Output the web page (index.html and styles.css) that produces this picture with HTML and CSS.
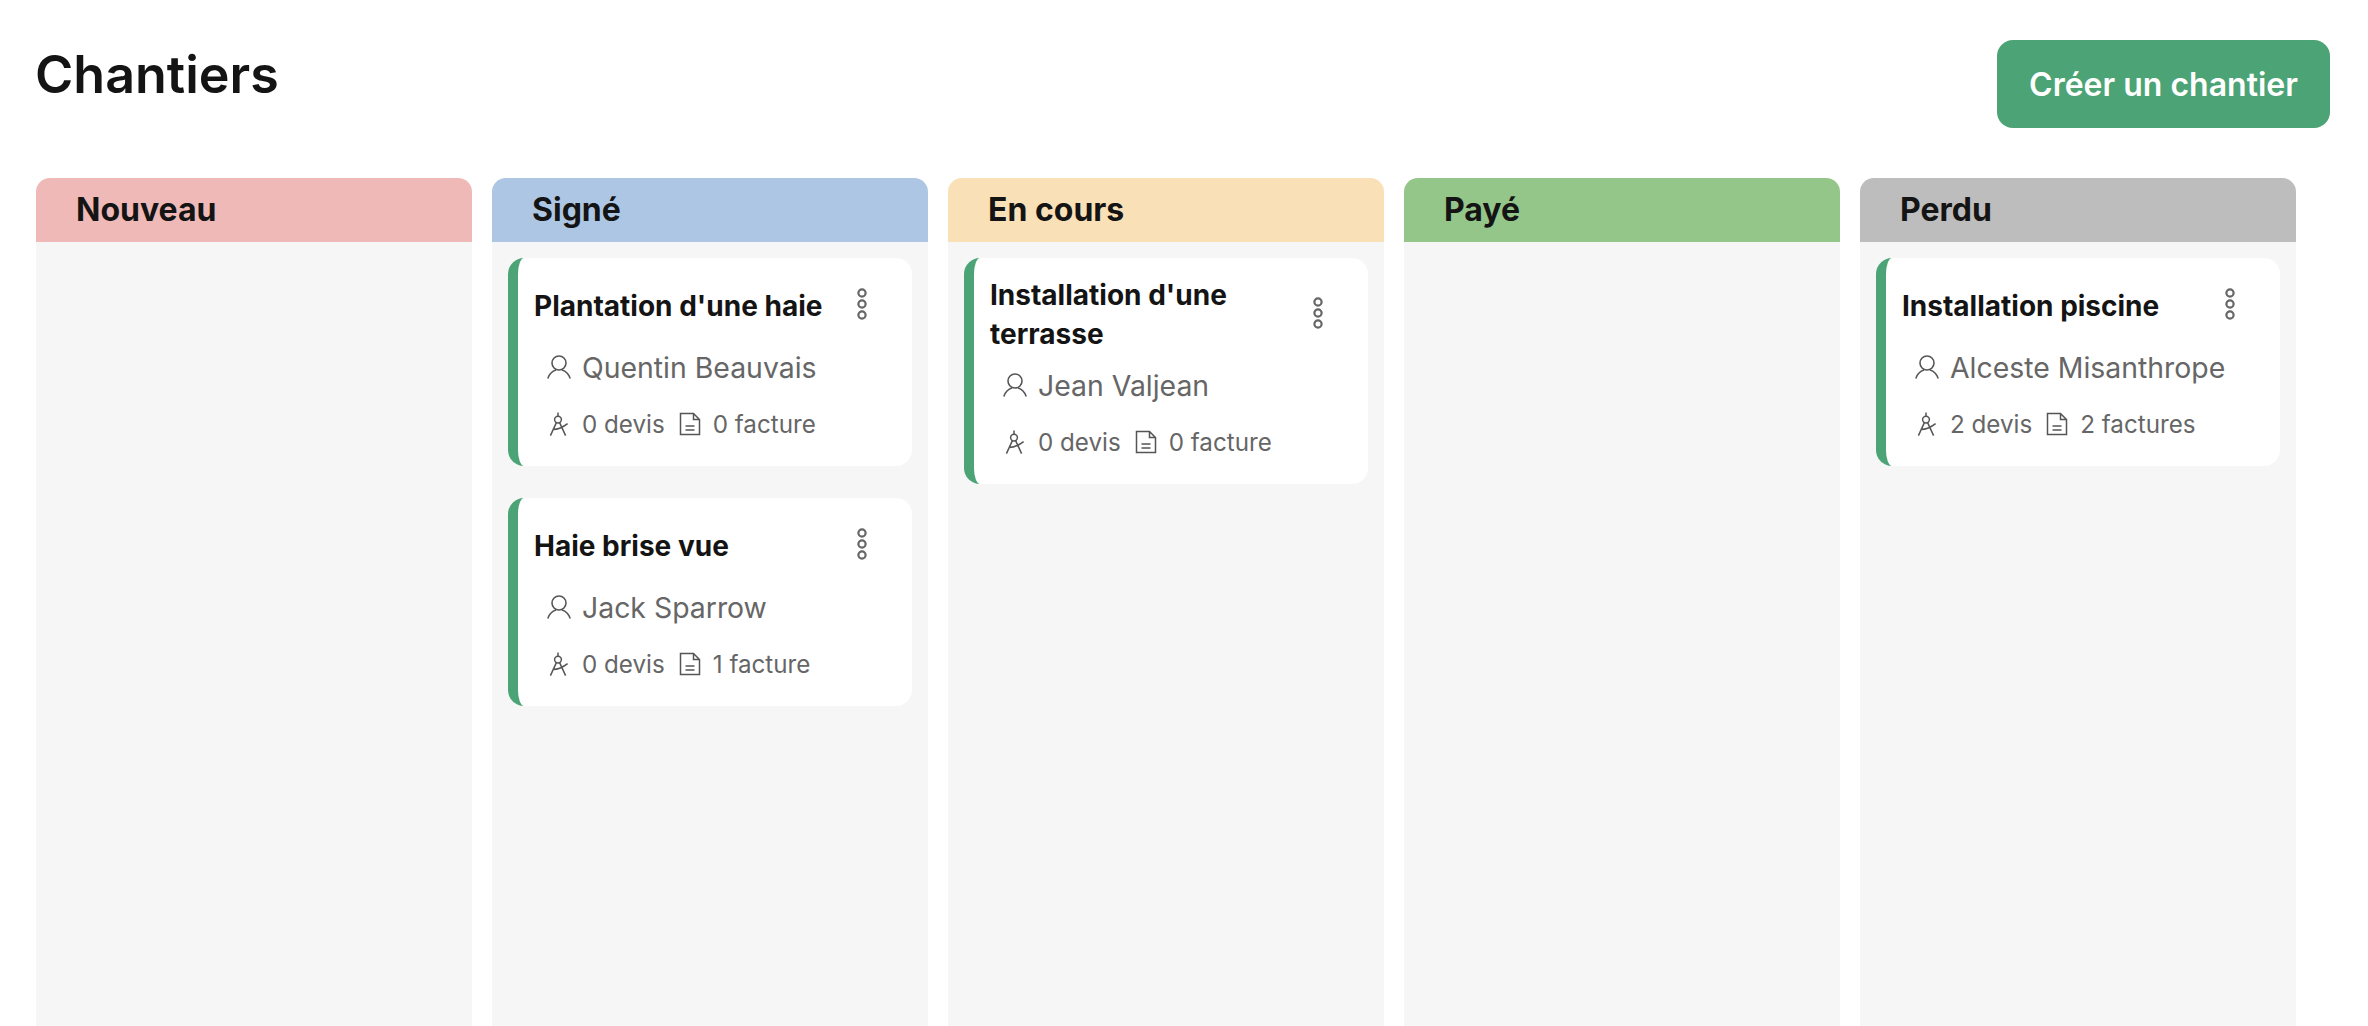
FILE: index.html
```html
<!DOCTYPE html>
<html lang="fr">
<head>
<meta charset="utf-8">
<title>Chantiers</title>
<link rel="stylesheet" href="styles.css">
</head>
<body>
<svg class="sprite" aria-hidden="true">
  <symbol id="i-user" viewBox="0 0 24 24"><circle cx="12" cy="8" r="7"/><path d="M0.8 23.4C2.4 18.8 5.6 16 9 15M23.2 23.4C21.6 18.8 18.4 16 15 15"/></symbol>
  <symbol id="i-compass" viewBox="0 0 24 24"><circle cx="11" cy="7.6" r="3.4"/><path d="M11 4.2V0.6M9.4 10.6L3.4 23.6M12.6 10.6L18.6 23.6M6 17.6C10.5 17.4 15.5 15.6 20.6 11.6"/></symbol>
  <symbol id="i-file" viewBox="0 0 24 24"><path d="M2.5 1.5H15.5L21.5 7.5V22.5H2.5ZM15.5 1.5V7.5H21.5M7.5 14H16.5M7.5 18H16.5"/></symbol>
  <symbol id="i-dots" viewBox="0 0 12 34"><circle cx="6" cy="6" r="3.6"/><circle cx="6" cy="17" r="3.6"/><circle cx="6" cy="28" r="3.6"/></symbol>
</svg>
<main class="page">
  <header class="topbar">
    <h1 class="title">Chantiers</h1>
    <button class="create">Créer un chantier</button>
  </header>
  <section class="board">
    <div class="column">
      <h2 class="col-head head-red">Nouveau</h2>
      <div class="col-body"></div>
    </div>
    <div class="column">
      <h2 class="col-head head-blue">Signé</h2>
      <div class="col-body">
        <article class="card">
          <div class="card-top"><h3 class="card-title">Plantation d'une haie</h3><span class="more"><svg class="dots"><use href="#i-dots"/></svg></span></div>
          <div class="client"><svg class="ic-user"><use href="#i-user"/></svg><span>Quentin Beauvais</span></div>
          <div class="meta"><svg class="ic-compass"><use href="#i-compass"/></svg><span class="devis">0 devis</span><svg class="ic-file"><use href="#i-file"/></svg><span>0 facture</span></div>
        </article>
        <article class="card">
          <div class="card-top"><h3 class="card-title">Haie brise vue</h3><span class="more"><svg class="dots"><use href="#i-dots"/></svg></span></div>
          <div class="client"><svg class="ic-user"><use href="#i-user"/></svg><span>Jack Sparrow</span></div>
          <div class="meta"><svg class="ic-compass"><use href="#i-compass"/></svg><span class="devis">0 devis</span><svg class="ic-file"><use href="#i-file"/></svg><span>1 facture</span></div>
        </article>
      </div>
    </div>
    <div class="column">
      <h2 class="col-head head-orange">En cours</h2>
      <div class="col-body">
        <article class="card">
          <div class="card-top"><h3 class="card-title">Installation d'une terrasse</h3><span class="more"><svg class="dots"><use href="#i-dots"/></svg></span></div>
          <div class="client"><svg class="ic-user"><use href="#i-user"/></svg><span>Jean Valjean</span></div>
          <div class="meta"><svg class="ic-compass"><use href="#i-compass"/></svg><span class="devis">0 devis</span><svg class="ic-file"><use href="#i-file"/></svg><span>0 facture</span></div>
        </article>
      </div>
    </div>
    <div class="column">
      <h2 class="col-head head-green">Payé</h2>
      <div class="col-body"></div>
    </div>
    <div class="column">
      <h2 class="col-head head-grey">Perdu</h2>
      <div class="col-body">
        <article class="card">
          <div class="card-top"><h3 class="card-title">Installation piscine</h3><span class="more"><svg class="dots"><use href="#i-dots"/></svg></span></div>
          <div class="client"><svg class="ic-user"><use href="#i-user"/></svg><span>Alceste Misanthrope</span></div>
          <div class="meta"><svg class="ic-compass"><use href="#i-compass"/></svg><span class="devis">2 devis</span><svg class="ic-file"><use href="#i-file"/></svg><span>2 factures</span></div>
        </article>
      </div>
    </div>
  </section>
</main>
</body>
</html>
```
FILE: styles.css
```css
* { box-sizing: border-box; }
html, body { height: 100%; }
body {
  margin: 0;
  background: #fff;
  color: #141414;
  font-family: Inter, "Liberation Sans", sans-serif;
  overflow: hidden;
}
.sprite { display: none; }
.page {
  height: 100%;
  padding: 40px 38px 0 36px;
  display: flex;
  flex-direction: column;
}
.topbar {
  display: flex;
  justify-content: space-between;
  align-items: flex-start;
  height: 138px;
  flex: none;
}
.title {
  margin: 0;
  margin-left: -1px;
  font-size: 52px;
  line-height: 70px;
  font-weight: 600;
  color: #141414;
}
.create {
  width: 333px;
  height: 88px;
  border: 0;
  border-radius: 16px;
  background: #4ca375;
  color: #fff;
  font: 600 32px Inter, sans-serif;
  padding: 0;
}
.board {
  display: flex;
  gap: 20px;
  flex: 1;
}
.column {
  width: 436px;
  flex: none;
  display: flex;
  flex-direction: column;
}
.col-head {
  margin: 0;
  height: 64px;
  padding-left: 40px;
  border-radius: 14px 14px 0 0;
  font-size: 32px;
  line-height: 64px;
  font-weight: 650;
  color: #141414;
}
.head-red { background: #efb9b7; }
.head-blue { background: #acc6e4; }
.head-orange { background: #fae0b6; }
.head-green { background: #94c68a; }
.head-grey { background: #bdbdbd; }
.col-body {
  flex: 1;
  background: #f6f6f6;
  padding: 16px;
  display: flex;
  flex-direction: column;
  gap: 32px;
}
.card {
  background: #fff;
  border-left: 10px solid #4ca375;
  border-radius: 16px;
  padding: 18px 0 24px 16px;
}
.card-top {
  display: flex;
  align-items: center;
  min-height: 60px;
}
.card-title {
  margin: 0;
  flex: 1;
  font-size: 28px;
  line-height: 39px;
  font-weight: 700;
  color: #141414;
}
.more {
  flex: none;
  width: 80px;
  height: 34px;
  margin-bottom: 4px;
  padding-left: 24px;
  display: flex;
}
.dots {
  width: 12px;
  height: 34px;
  fill: none;
  stroke: #666;
  stroke-width: 2.2;
}
.client {
  display: flex;
  align-items: center;
  height: 36px;
  margin-top: 13px;
  padding-left: 13px;
  font-size: 28.4px;
  color: #666;
}
.ic-user {
  width: 24px;
  height: 24px;
  margin-right: 11px;
  fill: none;
  stroke: #555;
  stroke-width: 1.6;
}
.meta {
  display: flex;
  align-items: center;
  height: 36px;
  margin-top: 21px;
  padding-left: 13px;
  font-size: 24.2px;
  color: #666;
}
.ic-compass {
  width: 24px;
  height: 24px;
  margin-right: 11px;
  fill: none;
  stroke: #555;
  stroke-width: 1.5;
}
.devis { margin-right: 13px; }
.ic-file {
  width: 24px;
  height: 24px;
  margin-right: 11px;
  fill: none;
  stroke: #555;
  stroke-width: 1.5;
}
```
